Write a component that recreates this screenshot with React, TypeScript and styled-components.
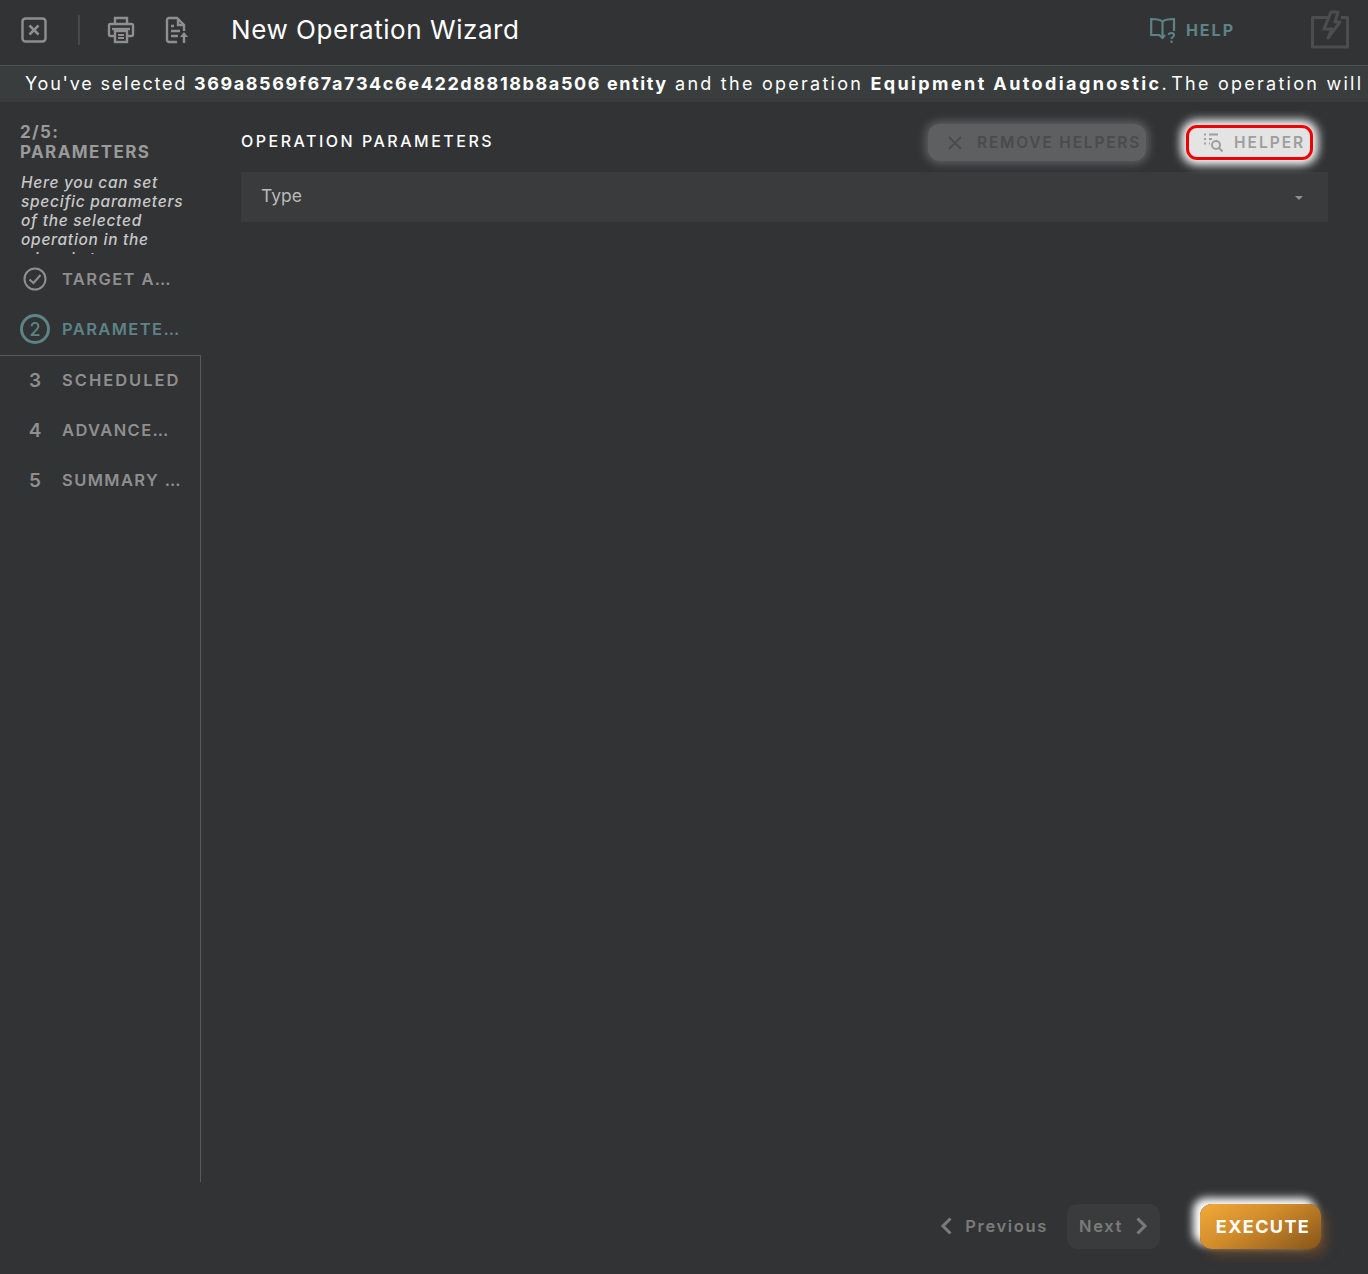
import React, { FC } from 'react';
import styled, { createGlobalStyle } from 'styled-components';

const font = `Inter, "Open Sans", "Liberation Sans", sans-serif`;

const GlobalStyle = createGlobalStyle`
  html, body {
    margin: 0;
    padding: 0;
    background: #323335;
  }
  * {
    box-sizing: border-box;
  }
`;

const Page = styled.div`
  width: 1368px;
  height: 1274px;
  display: flex;
  flex-direction: column;
  overflow: hidden;
  background: #323335;
  font-family: ${font};
`;

const Header = styled.header`
  height: 66px;
  flex: none;
  display: flex;
  align-items: center;
  padding: 0 18px 6px 21px;
  border-bottom: 1px solid #4c4f4f;
`;

const IconSlot = styled.span<{ $w: number; $mr: number }>`
  display: flex;
  width: ${p => p.$w}px;
  margin-right: ${p => p.$mr}px;
  flex: none;
`;

const Divider = styled.span`
  width: 2px;
  height: 30px;
  background: #48494b;
  margin-right: 27px;
  flex: none;
`;

const Title = styled.h1`
  margin: 0;
  font-size: 26px;
  font-weight: 400;
  color: #ffffff;
  letter-spacing: 0.55px;
  flex: 1;
`;

const HelpLink = styled.a`
  display: flex;
  align-items: center;
  gap: 10px;
  color: #5d8387;
  font-size: 16px;
  font-weight: 700;
  letter-spacing: 2px;
  margin-right: 75px;
`;

const Banner = styled.div`
  height: 36px;
  flex: none;
  background: #393d3d;
  color: #ffffff;
  font-size: 18px;
  line-height: 36px;
  padding-left: 25px;
  white-space: nowrap;
  overflow: hidden;
  letter-spacing: 2.25px;
`;

const Lead = styled.span`
  letter-spacing: 1.78px;
`;

const Stop = styled.span`
  letter-spacing: -0.25px;
`;

const Strong = styled.b<{ $spacing: number }>`
  font-weight: 700;
  letter-spacing: ${p => p.$spacing}px;
`;

const Body = styled.div`
  flex: 1;
  display: flex;
  min-height: 0;
`;

const Sidebar = styled.aside`
  width: 201px;
  flex: none;
  display: flex;
  flex-direction: column;
`;

const Intro = styled.div`
  height: 152px;
  padding: 20px 0 0 20px;
  flex: none;
`;

const IntroTitle = styled.div`
  font-size: 17px;
  line-height: 20px;
  font-weight: 700;
  color: #9a9a9a;
  letter-spacing: 1.4px;
`;

const IntroText = styled.p`
  margin: 11px 0 0 1px;
  width: 172px;
  height: 81px;
  overflow: hidden;
  font-size: 15.5px;
  line-height: 19px;
  font-style: italic;
  font-weight: 500;
  letter-spacing: 0.72px;
  color: #c8c8c8;
`;

const Steps = styled.div`
  flex: none;
  height: 101px;
`;

const PendingSteps = styled.div`
  flex: 1;
  border-top: 1px solid #58595b;
  border-right: 1px solid #58595b;
`;

const Step = styled.div<{ $pending?: boolean }>`
  height: 50px;
  display: flex;
  align-items: center;
  padding-left: 20px;
  padding-bottom: ${p => (p.$pending ? '2px' : '0')};
`;

const StepMarker = styled.span<{ $active?: boolean; $pending?: boolean }>`
  width: 30px;
  height: 30px;
  flex: none;
  display: flex;
  align-items: center;
  justify-content: center;
  margin-right: 12px;
  border-radius: 50%;
  font-size: ${p => (p.$pending ? '19px' : '18px')};
  font-weight: ${p => (p.$pending ? 600 : 500)};
  color: ${p => (p.$active ? '#5d8387' : '#8f8f8f')};
  border: ${p => (p.$active ? '3px solid #5d8387' : 'none')};
`;

const StepLabel = styled.span<{ $active?: boolean; $cut?: boolean }>`
  font-size: 16.5px;
  font-weight: 600;
  letter-spacing: ${p => (p.$cut ? '1.4px' : '2px')};
  white-space: nowrap;
  color: ${p => (p.$active ? '#5d8387' : '#8f8f8f')};
`;

const Main = styled.main`
  flex: 1;
  padding: 21px 40px 0;
  min-width: 0;
`;

const MainHead = styled.div`
  height: 39px;
  display: flex;
  align-items: center;
  margin-bottom: 10px;
`;

const SectionTitle = styled.h2`
  margin: 0 0 4px;
  flex: 1;
  font-size: 16px;
  font-weight: 500;
  color: #ffffff;
  letter-spacing: 2.5px;
`;

const HelperButton = styled.button<{ $highlight?: boolean }>`
  height: 37px;
  display: flex;
  align-items: center;
  font-family: ${font};
  font-size: 15.5px;
  font-weight: 600;
  cursor: default;
  white-space: nowrap;
  ${p =>
    p.$highlight
      ? `
    width: 127px;
    height: 35px;
    margin-right: 15px;
    margin-left: 40px;
    padding: 0 0 0 14px;
    gap: 11px;
    letter-spacing: 2px;
    background: #e4e4e4;
    color: #9e9e9e;
    border: 3px solid #f00000;
    border-radius: 11px;
    box-shadow: 0 0 10px 5px #ffffff;
  `
      : `
    width: 218px;
    padding: 0 0 0 20px;
    gap: 15px;
    letter-spacing: 1.8px;
    background: #5e5f61;
    color: #4a4b4d;
    border: none;
    border-radius: 12px;
    box-shadow: 0 0 9px 3px #5e5f61;
  `}
`;

const SelectField = styled.div`
  height: 50px;
  display: flex;
  align-items: center;
  justify-content: space-between;
  padding: 0 25px 3px 20px;
  background: #3a3b3d;
  font-size: 17.5px;
  color: #b9b9b9;
`;

const Caret = styled.span`
  width: 0;
  height: 0;
  margin-top: 5px;
  border-left: 4px solid transparent;
  border-right: 4px solid transparent;
  border-top: 4px solid #8f8f8f;
`;

const Footer = styled.footer`
  height: 92px;
  flex: none;
  display: flex;
  align-items: flex-start;
  justify-content: flex-end;
  padding: 22px 47px 0 0;
`;

const NavButton = styled.span<{ $filled?: boolean }>`
  height: 45px;
  display: flex;
  align-items: center;
  gap: 13px;
  padding: 0 12px 2px;
  border-radius: 10px;
  font-size: 16.5px;
  font-weight: 600;
  letter-spacing: 1.65px;
  color: #7b7b7b;
  background: ${p => (p.$filled ? '#3a3b3d' : 'transparent')};
  margin-left: ${p => (p.$filled ? '7px' : '0')};
`;

const ExecuteButton = styled.button`
  width: 121px;
  height: 45px;
  margin-left: 40px;
  padding: 0 0 0 5px;
  border: none;
  border-radius: 12px;
  background: linear-gradient(150deg, #f3aa3a 0%, #cf8a2a 45%, #85541a 100%);
  box-shadow: -6px -5px 9px 1px #ffffff, 6px 6px 12px rgba(150, 90, 30, 0.45);
  color: #ffffff;
  font-family: ${font};
  font-size: 18px;
  font-weight: 700;
  letter-spacing: 1.4px;
`;

const CloseIcon: FC = () => (
  <svg width="26" height="26" viewBox="0 0 26 26" fill="none" stroke="#8f8f8f">
    <rect x="1.5" y="1.5" width="23" height="23" rx="3" strokeWidth="2.4" />
    <path d="M8.5 8.5l9 9M17.5 8.5l-9 9" strokeWidth="2.6" />
  </svg>
);

const PrintIcon: FC = () => (
  <svg width="28" height="28" viewBox="0 0 28 28" fill="none" stroke="#8f8f8f" strokeWidth="2.4">
    <path d="M8 8V2h12v6" />
    <path d="M7 20H3.500A1.500 1.500 0 0 1 2 18.500V9.500A1.500 1.500 0 0 1 3.500 8h21A1.500 1.500 0 0 1 26 9.500v9a1.500 1.500 0 0 1-1.500 1.500H21" />
    <path d="M5 13h18" />
    <rect x="8" y="15" width="12" height="11" />
    <path d="M11 19h6M11 22h6" strokeWidth="1.800" />
  </svg>
);

const FileUploadIcon: FC = () => (
  <svg width="24" height="28" viewBox="0 0 24 28" fill="none" stroke="#8f8f8f" strokeWidth="2.4">
    <path d="M12 26H4a2 2 0 0 1-2-2V4a2 2 0 0 1 2-2h8l7 7v6" />
    <path d="M13 2v7h6" />
    <path d="M6 10h3M6 15h9M6 20h7" />
    <path d="M19 27v-7" />
    <path d="M15 21l4-5 4 5z" fill="#8f8f8f" stroke="none" />
  </svg>
);

const HelpBookIcon: FC = () => (
  <svg width="26" height="26" viewBox="0 0 26 26" fill="none" stroke="#5d8387" strokeWidth="2.2">
    <path d="M12.500 4.500C10 2.500 5.500 2 1.200 2v16h8l3.300 3 2.500-3" />
    <path d="M12.500 4.500C15 2.500 19.500 2 24 2v12" />
    <path d="M12.500 4.500V20" />
    <path d="M18.500 18c.300-2.800 5.500-2.800 5.500 0 0 2-2.500 2-2.500 4M21.500 23.500V26" strokeWidth="2" />
  </svg>
);

const BoltBoxIcon: FC = () => (
  <svg width="40" height="40" viewBox="0 0 40 40" fill="none" stroke="#4c4d4f" strokeWidth="3" strokeLinejoin="round">
    <path d="M19 7.500H2.500v29.500h35V7.500H31" />
    <path d="M21 2h7l-3 10h5L18 28l4-9h-8z" />
  </svg>
);

const CheckCircleIcon: FC = () => (
  <svg width="24" height="24" viewBox="0 0 24 24" fill="none" stroke="#8f8f8f" strokeWidth="2">
    <circle cx="12" cy="12" r="10.500" />
    <path d="M6.500 12.500l4 3.500 7-8" />
  </svg>
);

const SearchListIcon: FC = () => (
  <svg width="20" height="20" viewBox="0 0 20 20" fill="none" stroke="#9e9e9e" strokeWidth="2">
    <path d="M1 1.500h2M1 6h2M1 10.500h2M6 1.500h9M6 6h3M6 10.500h1" />
    <circle cx="13" cy="12" r="4" />
    <path d="M16 15l3.500 3.500" />
  </svg>
);

const Chevron: FC<{ dir: 'left' | 'right' }> = ({ dir }) => (
  <svg width="12" height="18" viewBox="0 0 12 18" fill="none" stroke="#7b7b7b" strokeWidth="3">
    <path d={dir === 'left' ? 'M10.500 1.500L3 9l7.500 7.500' : 'M1.500 1.500L9 9l-7.500 7.500'} />
  </svg>
);

const App: FC = () => (
  <Page>
    <GlobalStyle />
    <Header>
      <IconSlot $w={26} $mr={31}><CloseIcon /></IconSlot>
      <Divider />
      <IconSlot $w={28} $mr={30}><PrintIcon /></IconSlot>
      <IconSlot $w={24} $mr={42}><FileUploadIcon /></IconSlot>
      <Title>New Operation Wizard</Title>
      <HelpLink><HelpBookIcon />HELP</HelpLink>
      <IconSlot $w={40} $mr={0}><BoltBoxIcon /></IconSlot>
    </Header>
    <Banner>
      <Lead>You've selected </Lead><Strong $spacing={1.6}>369a8569f67a734c6e422d8818b8a506 entity</Strong> and the operation <Strong $spacing={2.4}>Equipment Autodiagnostic</Strong><Stop>. </Stop>The operation will
    </Banner>
    <Body>
      <Sidebar>
        <Intro>
          <IntroTitle>2/5:<br />PARAMETERS</IntroTitle>
          <IntroText>Here you can set specific parameters of the selected operation in the wizard step</IntroText>
        </Intro>
        <Steps>
          <Step>
            <StepMarker><CheckCircleIcon /></StepMarker>
            <StepLabel $cut>TARGET A…</StepLabel>
          </Step>
          <Step>
            <StepMarker $active>2</StepMarker>
            <StepLabel $active $cut>PARAMETE…</StepLabel>
          </Step>
        </Steps>
        <PendingSteps>
          <Step $pending><StepMarker $pending>3</StepMarker><StepLabel>SCHEDULED</StepLabel></Step>
          <Step $pending><StepMarker $pending>4</StepMarker><StepLabel $cut>ADVANCE…</StepLabel></Step>
          <Step $pending><StepMarker $pending>5</StepMarker><StepLabel $cut>SUMMARY …</StepLabel></Step>
        </PendingSteps>
      </Sidebar>
      <Main>
        <MainHead>
          <SectionTitle>OPERATION PARAMETERS</SectionTitle>
          <HelperButton>
            <svg width="14" height="14" viewBox="0 0 14 14" fill="none" stroke="#4a4b4d" strokeWidth="1.800">
              <path d="M1 1l12 12M13 1L1 13" />
            </svg>
            REMOVE HELPERS
          </HelperButton>
          <HelperButton $highlight><SearchListIcon />HELPER</HelperButton>
        </MainHead>
        <SelectField>Type<Caret /></SelectField>
      </Main>
    </Body>
    <Footer>
      <NavButton><Chevron dir="left" />Previous</NavButton>
      <NavButton $filled>Next<Chevron dir="right" /></NavButton>
      <ExecuteButton>EXECUTE</ExecuteButton>
    </Footer>
  </Page>
);

export default App;
